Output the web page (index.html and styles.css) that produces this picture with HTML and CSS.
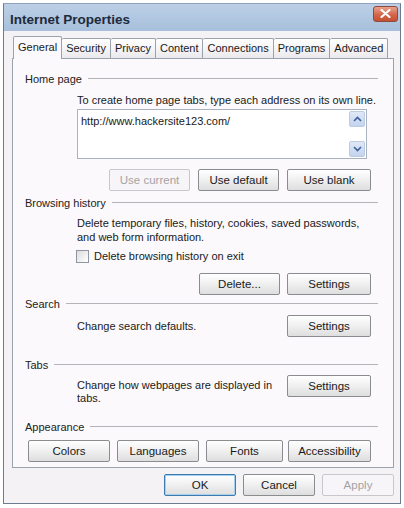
FILE: index.html
```html
<!DOCTYPE html>
<html lang="en">
<head>
  <meta charset="UTF-8" />
  <title>Internet Properties</title>
  <link rel="stylesheet" href="styles.css">
</head>
<body>
  <div class="window">
    <div class="titlebar">
      <span class="title">Internet Properties</span>
      <span class="close">
        <svg width="11" height="9" viewBox="0 0 11 9"><path d="M1.5 1 L9.5 8 M9.5 1 L1.5 8" stroke="#fff" stroke-width="2.2" stroke-linecap="round"/></svg>
      </span>
    </div>

    <div class="content">
      <div class="tabs">
        <span class="tab active">General</span>
        <span class="tab">Security</span>
        <span class="tab">Privacy</span>
        <span class="tab">Content</span>
        <span class="tab">Connections</span>
        <span class="tab">Programs</span>
        <span class="tab">Advanced</span>
      </div>

      <div class="panel">
        <!-- Home page -->
        <div class="group-head home-head"><span>Home page</span><i></i></div>
        <div class="indent">
          <p class="desc one">To create home page tabs, type each address on its own line.</p>
          <div class="urlbox">
            <span class="url">http://www.hackersite123.com/</span>
            <div class="scroll">
              <span class="arrow"><svg width="9" height="6" viewBox="0 0 9 6"><path d="M1 5 L4.5 1.5 L8 5" fill="none" stroke="#3d5f9a" stroke-width="1.6"/></svg></span>
              <span class="arrow"><svg width="9" height="6" viewBox="0 0 9 6"><path d="M1 1 L4.5 4.5 L8 1" fill="none" stroke="#3d5f9a" stroke-width="1.6"/></svg></span>
            </div>
          </div>
        </div>
        <div class="btn-row home-btns">
          <button class="btn disabled">Use current</button>
          <button class="btn">Use default</button>
          <button class="btn wide">Use blank</button>
        </div>

        <!-- Browsing history -->
        <div class="group-head history-head"><span>Browsing history</span><i></i></div>
        <div class="indent">
          <p class="desc two">Delete temporary files, history, cookies, saved passwords,<br>and web form information.</p>
          <label class="check"><span class="box"></span>Delete browsing history on exit</label>
        </div>
        <div class="btn-row history-btns">
          <button class="btn">Delete...</button>
          <button class="btn wide">Settings</button>
        </div>

        <!-- Search -->
        <div class="group-head search-head"><span>Search</span><i></i></div>
        <div class="indent line-row search-row">
          <p class="desc">Change search defaults.</p>
          <button class="btn wide">Settings</button>
        </div>

        <!-- Tabs -->
        <div class="group-head tabs-head"><span>Tabs</span><i></i></div>
        <div class="indent line-row tabs-row">
          <p class="desc">Change how webpages are displayed in<br>tabs.</p>
          <button class="btn wide">Settings</button>
        </div>

        <!-- Appearance -->
        <div class="group-head look-head"><span>Appearance</span><i></i></div>
        <div class="look-btns">
          <button class="btn">Colors</button>
          <button class="btn">Languages</button>
          <button class="btn fonts">Fonts</button>
          <button class="btn access">Accessibility</button>
        </div>
      </div>

      <div class="footer">
        <button class="btn foot default">OK</button>
        <button class="btn foot">Cancel</button>
        <button class="btn foot disabled">Apply</button>
      </div>
    </div>
  </div>
</body>
</html>
```

FILE: styles.css
```css
body {
  margin: 0;
  background: #ffffff;
  font-family: 'Liberation Sans', Arial, sans-serif;
  font-size: 11px;
  color: #1a1a1a;
}

.window {
  margin: 3px 0 0 3px;
  width: 398px;
  height: 501px;
  box-sizing: border-box;
  border: 1px solid #6d7b8e;
  border-top-color: #8fa3bd;
  background: #f5f2f5;
  display: flex;
  flex-direction: column;
}

.titlebar {
  height: 27px;
  background: linear-gradient(#bccfe6, #a7bfdc);
  display: flex;
  align-items: center;
  justify-content: space-between;
  padding: 0 2px 0 6px;
}

.title {
  font-weight: bold;
  font-size: 13.5px;
  color: #1d2a3a;
  margin-top: 3px;
}

.close {
  width: 25px;
  height: 16px;
  margin-top: -8px;
  border: 1px solid #8e4a3c;
  border-radius: 3px;
  background: linear-gradient(#e9a38d, #d2664a 55%, #c65034);
  display: flex;
  align-items: center;
  justify-content: center;
  box-sizing: border-box;
}

.content {
  padding: 5px 6px 0 8px;
}

/* tab strip */
.tabs {
  display: flex;
  align-items: flex-end;
  height: 22px;
  padding-left: 1px;
  position: relative;
  z-index: 1;
}

.tab {
  height: 19px;
  line-height: 19px;
  padding: 0 4px;
  border: 1px solid #9aa3ad;
  border-left: none;
  border-bottom: none;
  border-radius: 2px 2px 0 0;
  background: linear-gradient(#ffffff, #ebe9ed);
  color: #1a1a1a;
  font-size: 11px;
}

.tab.active {
  height: 22px;
  line-height: 20px;
  margin-bottom: -1px;
  border-left: 1px solid #9aa3ad;
  background: #fbf9fb;
}

.panel {
  width: 382px;
  height: 410px;
  box-sizing: border-box;
  border: 1px solid #9aa3ad;
  background: #fbf9fb;
  padding: 0 16px 0 12px;
}

.group-head {
  display: flex;
  align-items: center;
  height: 13px;
  color: #222;
}

.group-head i {
  flex: 1;
  border-top: 1px solid #b4b4b8;
  margin-left: 6px;
  margin-right: -1px;
}

.home-head { margin-top: 13px; }
.history-head { margin-top: 5px; }
.search-head { margin-top: 2px; }
.tabs-head { margin-top: 21px; }
.look-head { margin-top: 15px; }

.indent {
  padding-left: 52px;
}

.desc {
  margin: 0;
  line-height: 14px;
}

.desc.one { margin-top: 8px; }
.desc.two { margin-top: 7px; }

.urlbox {
  margin-top: 2px;
  width: 290px;
  height: 50px;
  box-sizing: border-box;
  border: 1px solid #a9b3bf;
  background: #ffffff;
  display: flex;
  justify-content: space-between;
}

.url {
  padding: 5px 0 0 3px;
}

.scroll {
  width: 16px;
  display: flex;
  flex-direction: column;
  justify-content: space-between;
  padding: 1px 1px 1px 0;
}

.arrow {
  height: 14px;
  border: 1px solid #bccbe3;
  border-radius: 2px;
  background: linear-gradient(#dfe8f7, #c3d4ee);
  display: flex;
  align-items: center;
  justify-content: center;
}

.check {
  display: flex;
  align-items: center;
  margin-top: 5px;
  height: 14px;
}

.box {
  width: 11px;
  height: 11px;
  border: 1px solid #8f96a0;
  background: linear-gradient(135deg, #dcdcdc, #ffffff);
  margin: 0 5px 0 -1px;
}

/* buttons */
.btn {
  height: 22px;
  box-sizing: border-box;
  border: 1px solid #8a8c90;
  border-radius: 2px;
  background: linear-gradient(#ffffff, #f1f1f1 45%, #dedede);
  font-family: inherit;
  font-size: 11.5px;
  color: #1a1a1a;
  padding: 0;
  width: 81px;
}

.btn.wide { width: 84px; }

.btn.disabled {
  border-color: #c8c8cc;
  background: #f7f5f7;
  color: #a3a3a6;
}

.btn-row {
  display: flex;
  justify-content: flex-end;
  gap: 7px;
  padding-right: 6px;
}

.home-btns { margin-top: 10px; gap: 8px; }
.history-btns { margin-top: 10px; }

.line-row {
  display: flex;
  justify-content: space-between;
  align-items: flex-start;
  padding-right: 6px;
}

.search-row { margin-top: 5px; }
.search-row .desc { line-height: 22px; }

.tabs-row { margin-top: 4px; }
.tabs-row .desc { margin-top: 4px; line-height: 13px; }

.look-btns {
  margin-top: 7px;
  display: flex;
  gap: 7px;
  padding-left: 3px;
}

.look-btns .btn { width: 82px; }
.look-btns .btn.fonts { width: 77px; }
.look-btns .btn.access { width: 83px; margin-left: -2px; }

.footer {
  display: flex;
  justify-content: flex-end;
  gap: 7px;
  margin-top: 6px;
}

.btn.foot { width: 72px; }

.btn.default {
  border-color: #3c7bb0;
  box-shadow: inset 0 0 0 1px #a7d0ef;
}
```
